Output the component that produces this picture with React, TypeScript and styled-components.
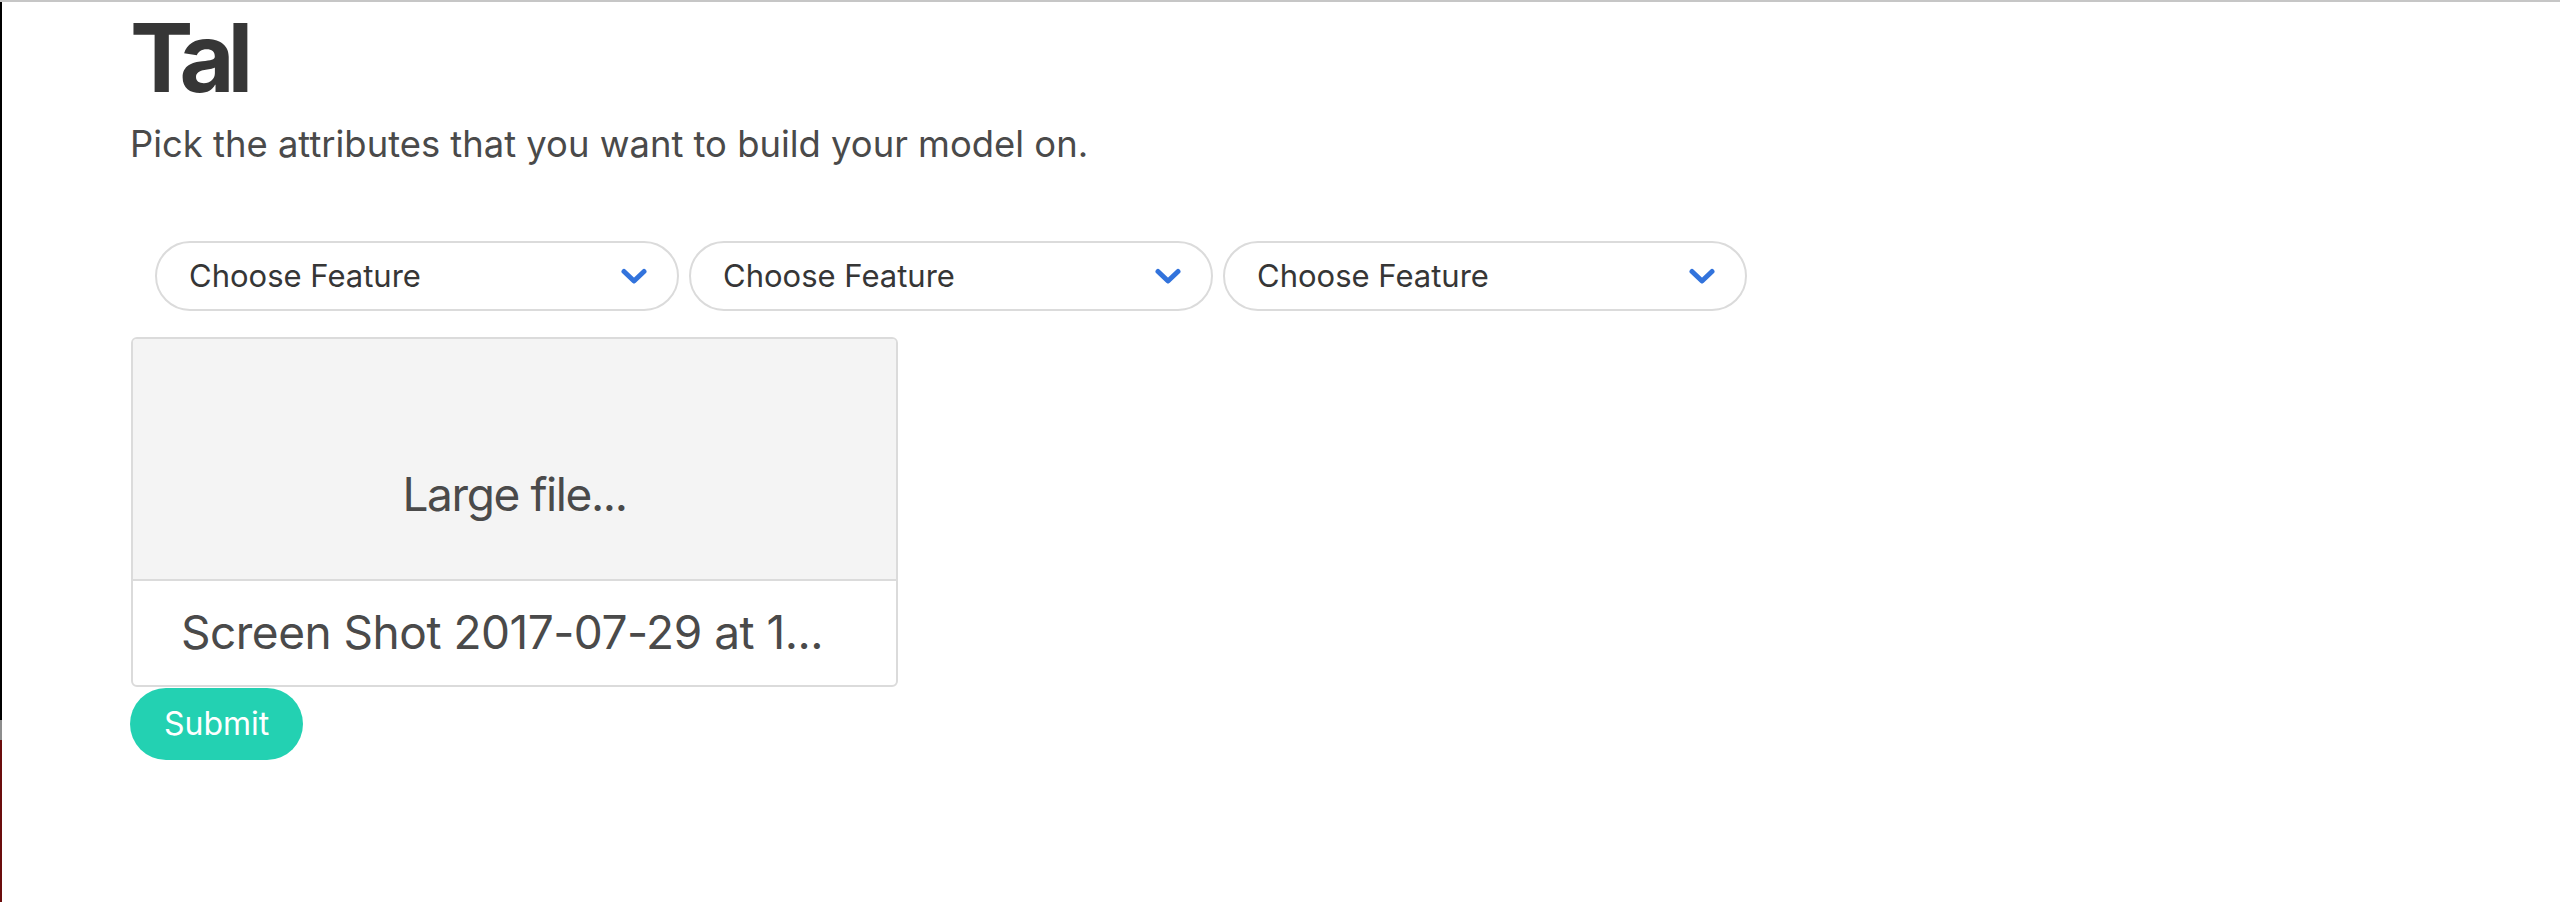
import styled, { createGlobalStyle } from "styled-components";

const TEXT_DARK = "#363636";
const TEXT = "#4a4a4a";
const LINE = "#dbdbdb";
const ACCENT = "#23d1b2";

const GlobalStyle = createGlobalStyle`
  html, body {
    margin: 0;
    padding: 0;
    background: #fff;
  }
  body {
    font-family: Inter, "Noto Sans", "Liberation Sans", sans-serif;
    color: ${TEXT_DARK};
  }
`;

const Frame = styled.div`
  position: relative;
  min-height: 100vh;
  box-sizing: border-box;
  border-top: 2px solid #c6c6c6;
  padding: 8px 0 0 130px;

  /* window edge seen at the left of the capture */
  &::before {
    content: "";
    position: absolute;
    left: 0;
    top: 0;
    bottom: 0;
    width: 2px;
    background: linear-gradient(#000 0 718px, #8d8d8d 718px 738px, #6b0d0d 738px);
  }
`;

const Title = styled.h1`
  margin: 0;
  font-size: 95px;
  line-height: 96px;
  font-weight: 700;
  letter-spacing: -7px;
  color: ${TEXT_DARK};
`;

const Subtitle = styled.p`
  margin: 20px 0 0;
  font-size: 36.4px;
  line-height: 36px;
  color: ${TEXT};
`;

const FeatureRow = styled.div`
  display: flex;
  gap: 10px;
  margin: 79px 0 0 25px;
`;

const Select = styled.div`
  box-sizing: border-box;
  width: 524px;
  height: 70px;
  display: flex;
  align-items: center;
  justify-content: space-between;
  padding: 0 30px 0 32px;
  border: 2px solid ${LINE};
  border-radius: 35px;
  background: #fff;
  font-size: 31px;
  line-height: 32px;
  color: ${TEXT_DARK};
`;

const Chevron = styled.svg`
  width: 26px;
  height: 17px;
  flex: none;
`;

const Card = styled.div`
  box-sizing: border-box;
  width: 767px;
  margin: 26px 0 0 1px;
  border: 2px solid ${LINE};
  border-radius: 6px;
  overflow: hidden;
`;

const Preview = styled.div`
  box-sizing: border-box;
  height: 242px;
  display: flex;
  justify-content: center;
  align-items: flex-start;
  padding-top: 132px;
  background: #f4f4f4;
  border-bottom: 2px solid ${LINE};
  font-size: 46px;
  line-height: 46px;
  letter-spacing: -1.4px;
  color: ${TEXT};
`;

const FileName = styled.div`
  box-sizing: border-box;
  height: 104px;
  padding: 28px 0 0 48px;
  font-size: 46px;
  line-height: 46px;
  letter-spacing: -0.5px;
  color: ${TEXT};
  white-space: nowrap;
`;

const SubmitButton = styled.button`
  display: block;
  height: 72px;
  margin-top: 1px;
  padding: 0 34px;
  border: none;
  border-radius: 36px;
  background: ${ACCENT};
  color: #fff;
  font-family: inherit;
  font-size: 32px;
  line-height: 32px;
`;

function FeatureSelect() {
  return (
    <Select>
      <span>Choose Feature</span>
      <Chevron viewBox="0 0 26 17">
        <path
          d="M3 3.5 L13 13 L23 3.5"
          fill="none"
          stroke="#3273dc"
          strokeWidth="5"
          strokeLinecap="round"
          strokeLinejoin="round"
        />
      </Chevron>
    </Select>
  );
}

export default function App() {
  return (
    <Frame>
      <GlobalStyle />
      <Title>Tal</Title>
      <Subtitle>Pick the attributes that you want to build your model on.</Subtitle>
      <FeatureRow>
        <FeatureSelect />
        <FeatureSelect />
        <FeatureSelect />
      </FeatureRow>
      <Card>
        <Preview>Large file...</Preview>
        <FileName>Screen Shot 2017-07-29 at 1...</FileName>
      </Card>
      <SubmitButton>Submit</SubmitButton>
    </Frame>
  );
}
